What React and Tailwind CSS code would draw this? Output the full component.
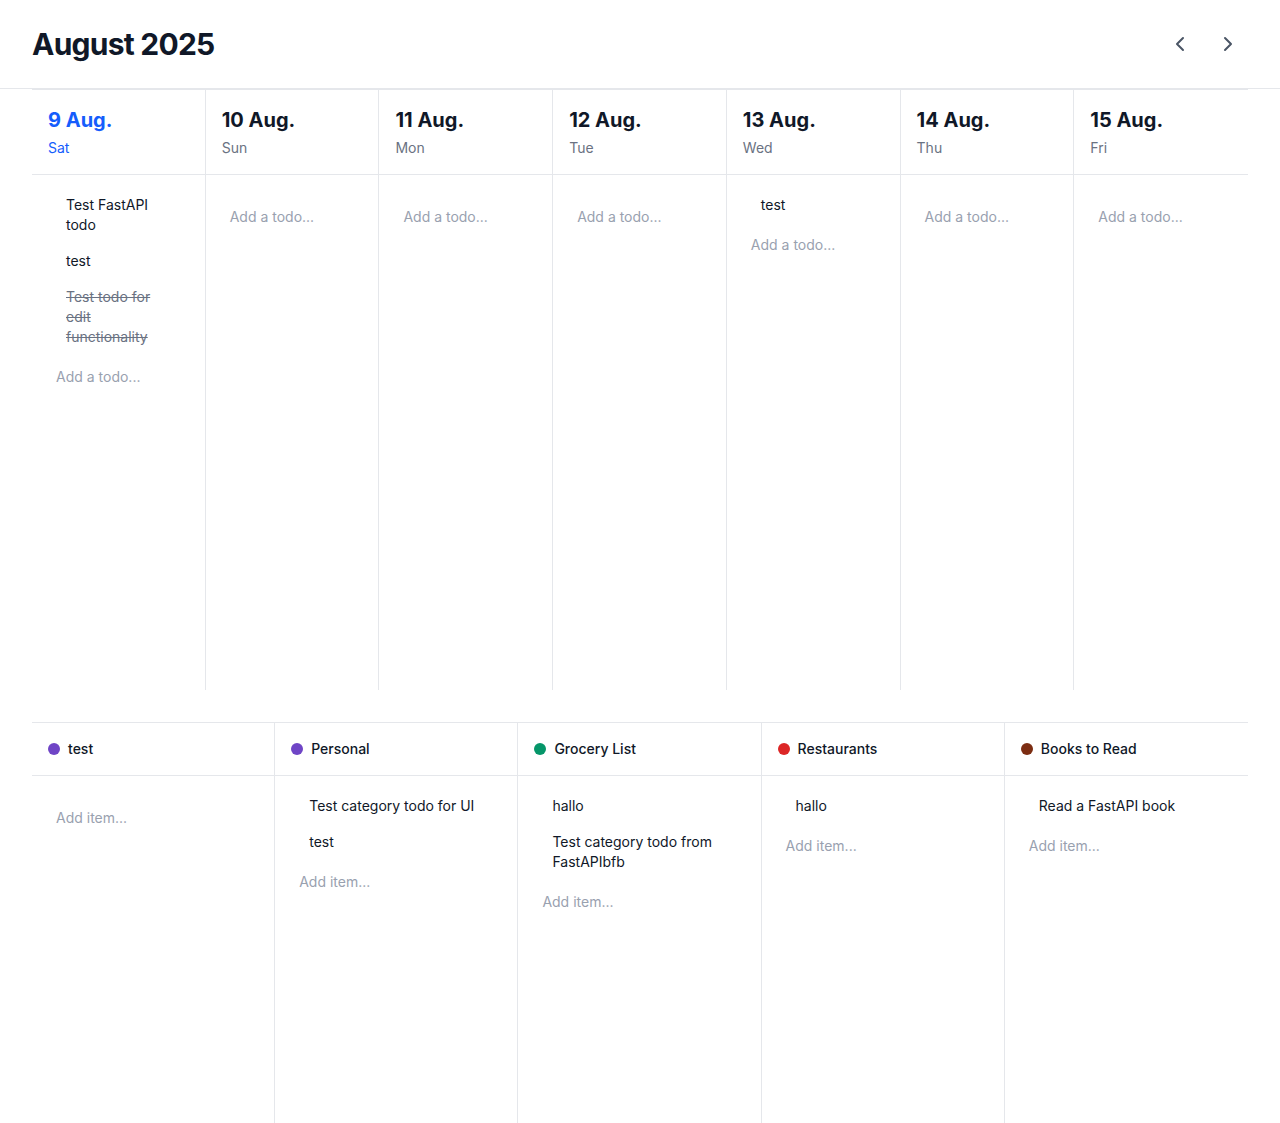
import { ChevronLeft, ChevronRight } from 'lucide-react'

const days = [
  { date: '9 Aug.', day: 'Sat', today: true, todos: [
    { text: 'Test FastAPI todo' },
    { text: 'test' },
    { text: 'Test todo for edit functionality', done: true },
  ] },
  { date: '10 Aug.', day: 'Sun', todos: [] },
  { date: '11 Aug.', day: 'Mon', todos: [] },
  { date: '12 Aug.', day: 'Tue', todos: [] },
  { date: '13 Aug.', day: 'Wed', todos: [{ text: 'test' }] },
  { date: '14 Aug.', day: 'Thu', todos: [] },
  { date: '15 Aug.', day: 'Fri', todos: [] },
]

const categories = [
  { name: 'test', dot: 'bg-[#6f45c6]', items: [] },
  { name: 'Personal', dot: 'bg-[#6f45c6]', items: ['Test category todo for UI', 'test'] },
  { name: 'Grocery List', dot: 'bg-[#059669]', items: ['hallo', 'Test category todo from FastAPIbfb'] },
  { name: 'Restaurants', dot: 'bg-[#dc2626]', items: ['hallo'] },
  { name: 'Books to Read', dot: 'bg-[#7c2d12]', items: ['Read a FastAPI book'] },
]

const TodoRow = ({ text, done }) => (
  <div className={`py-2 pl-[18px] pr-4 text-sm leading-5 ${done ? 'text-gray-500 line-through' : 'text-gray-900'}`}>
    {text}
  </div>
)

const AddInput = ({ label }) => (
  <div className="mt-1 px-2 py-2 text-sm leading-5 text-gray-400">{label}</div>
)

export default function App() {
  return (
    <div className="min-h-screen bg-white font-['Inter',sans-serif] text-gray-900">
      {/* Header */}
      <header className="flex items-center justify-between border-b border-gray-200 px-8 py-6">
        <h1 className="text-3xl font-bold leading-9 tracking-tight text-gray-900">August 2025</h1>
        <div className="flex items-center gap-2">
          <button className="p-2 text-gray-600">
            <ChevronLeft className="h-6 w-6" />
          </button>
          <button className="p-2 text-gray-600">
            <ChevronRight className="h-6 w-6" />
          </button>
        </div>
      </header>

      <main className="px-8">
        {/* Week */}
        <div className="grid grid-cols-7 border-t border-gray-200">
          {days.map((d, i) => (
            <div key={d.date} className={`flex h-[600px] flex-col ${i < 6 ? 'border-r border-gray-200' : ''}`}>
              <div className="border-b border-gray-200 px-4 py-4">
                <div className={`text-xl font-bold leading-7 ${d.today ? 'text-blue-600' : 'text-gray-900'}`}>{d.date}</div>
                <div className={`mt-1 text-sm leading-5 ${d.today ? 'text-blue-600' : 'text-gray-500'}`}>{d.day}</div>
              </div>
              <div className="px-4 pt-3">
                <div className="min-h-2">
                  {d.todos.map((t, j) => (
                    <TodoRow key={j} text={t.text} done={t.done} />
                  ))}
                </div>
                <AddInput label="Add a todo..." />
              </div>
            </div>
          ))}
        </div>

        {/* Categories */}
        <div className="mt-8 grid grid-cols-5 border-t border-gray-200">
          {categories.map((c, i) => (
            <div key={c.name} className={`flex h-[420px] flex-col ${i < 4 ? 'border-r border-gray-200' : ''}`}>
              <div className="flex items-center gap-2 border-b border-gray-200 px-4 py-4">
                <span className={`h-3 w-3 rounded-full ${c.dot}`} />
                <span className="text-sm font-medium leading-5 text-gray-900">{c.name}</span>
              </div>
              <div className="px-4 pt-3">
                <div className="min-h-2">
                  {c.items.map((t, j) => (
                    <TodoRow key={j} text={t} />
                  ))}
                </div>
                <AddInput label="Add item..." />
              </div>
            </div>
          ))}
        </div>
      </main>
    </div>
  )
}
